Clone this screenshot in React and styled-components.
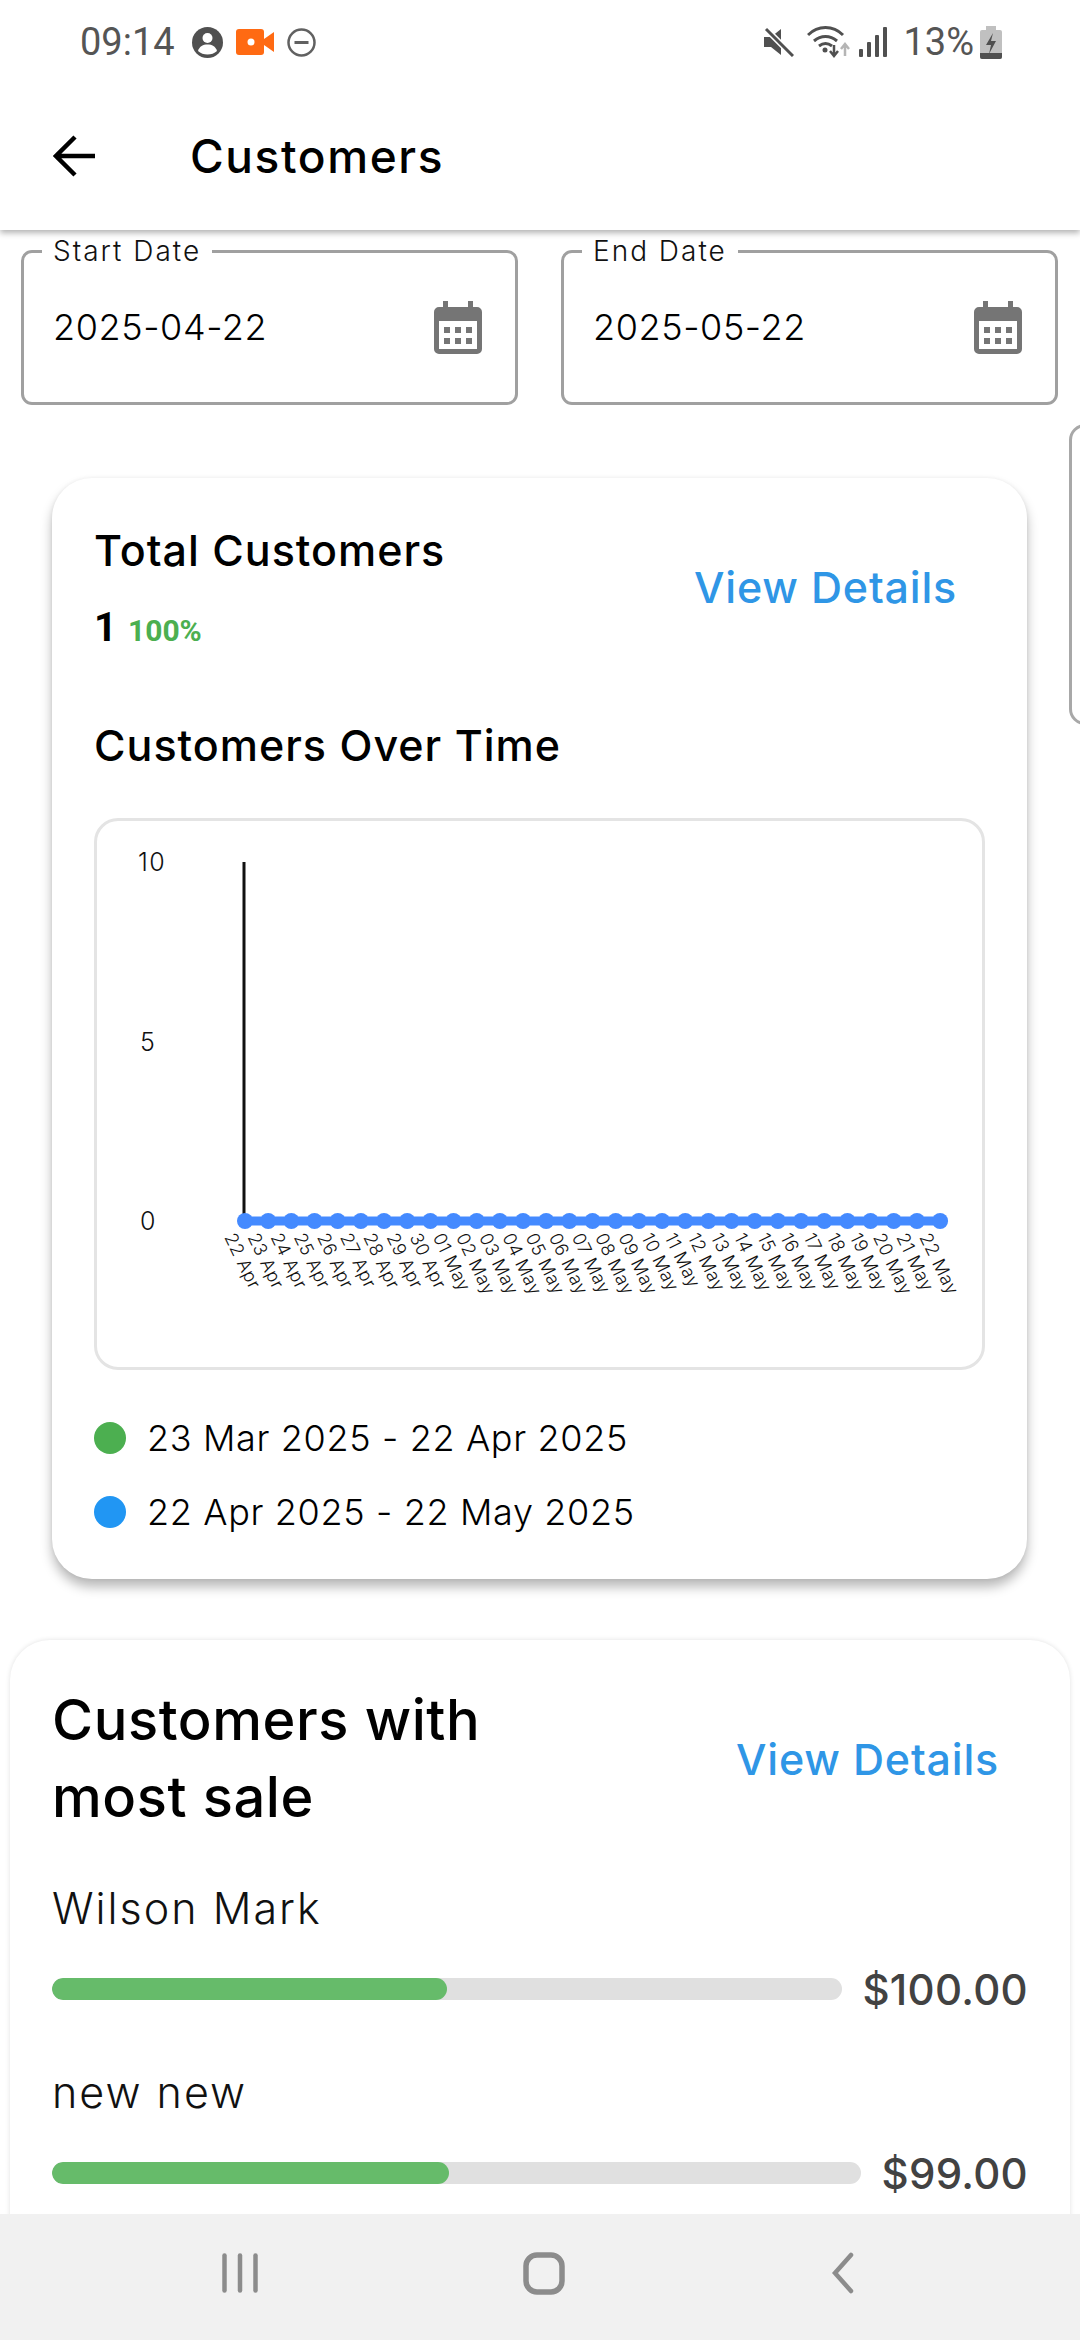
import styled, { createGlobalStyle } from 'styled-components';

const GlobalStyle = createGlobalStyle`
  html, body {
    margin: 0;
    padding: 0;
    background: #fff;
  }
  * {
    box-sizing: border-box;
  }
`;

const BASE = new Date(Date.UTC(2025, 3, 22));
const DAYS = Array.from({ length: 31 }, (_, i) => {
  const d = new Date(BASE.getTime() + i * 86400000);
  const day = String(d.getUTCDate()).padStart(2, '0');
  return `${day} ${d.getUTCMonth() === 3 ? 'Apr' : 'May'}`;
});

function CalendarIcon() {
  return (
    <svg width="48" height="53" viewBox="0 0 48 53">
      <rect x="9" y="0" width="5" height="8" fill="#757575" />
      <rect x="34" y="0" width="5" height="8" fill="#757575" />
      <path
        fill="#757575"
        fillRule="evenodd"
        d="M5 6h38a5 5 0 0 1 5 5v37a5 5 0 0 1-5 5H5a5 5 0 0 1-5-5V11a5 5 0 0 1 5-5zM5 20v28h38V20z"
      />
      {[10, 21, 32].map((x) =>
        [26, 37].map((y) => <rect key={`${x}${y}`} x={x} y={y} width="6" height="6" fill="#757575" />)
      )}
    </svg>
  );
}

function DateInput({ label, value }) {
  return (
    <Field>
      <FieldLabel>{label}</FieldLabel>
      <FieldValue>{value}</FieldValue>
      <CalendarIcon />
    </Field>
  );
}

function LineChart() {
  const x0 = 148;
  const step = 23.17;
  const y0 = 400;
  return (
    <svg width="884" height="546" viewBox="0 0 884 546">
      <line x1={x0 - 1} y1="41" x2={x0 - 1} y2={y0} stroke="#111" strokeWidth="3" />
      <ChartText x="41" y="50">10</ChartText>
      <ChartText x="43" y="230">5</ChartText>
      <ChartText x="43" y="409">0</ChartText>
      <line x1={x0} y1={y0} x2={x0 + step * 30} y2={y0} stroke="#448aff" strokeWidth="9" />
      {DAYS.map((day, i) => (
        <circle key={day} cx={x0 + step * i} cy={y0} r="8" fill="#448aff" />
      ))}
      {DAYS.map((day, i) => {
        const x = x0 - 21 + step * i;
        return (
          <AxisText key={day} x={x} y={416} transform={`rotate(64 ${x} 416)`}>
            {day}
          </AxisText>
        );
      })}
    </svg>
  );
}

function StatusBar() {
  return (
    <Status>
      <StatusGroup>
        <Time>09:14</Time>
        <svg width="31" height="31" viewBox="0 0 31 31">
          <circle cx="15.5" cy="15.5" r="15.5" fill="#505050" />
          <circle cx="15.5" cy="11" r="5" fill="#fff" />
          <path d="M6 24c1.5-5 5-6.5 9.5-6.5S23.500 19 25 24c-2.500 2.500-6 3.500-9.500 3.500S8.500 26.500 6 24z" fill="#fff" />
        </svg>
        <svg width="38" height="26" viewBox="0 0 38 26">
          <rect width="28" height="26" rx="3" fill="#ff6a13" />
          <path d="M28 10l10-7v20l-10-7z" fill="#ff6a13" />
          <circle cx="15" cy="13" r="3.500" fill="#fff" />
        </svg>
        <svg width="29" height="29" viewBox="0 0 29 29">
          <circle cx="14.500" cy="14.500" r="13" fill="none" stroke="#616161" strokeWidth="2.500" />
          <rect x="7.500" y="13" width="14" height="3" fill="#616161" />
        </svg>
      </StatusGroup>
      <StatusGroup>
        <svg width="30" height="30" viewBox="0 0 30 30">
          <path d="M0 10h7l10-8v26l-10-8H0z" fill="#505050" />
          <line x1="2" y1="2" x2="29" y2="29" stroke="#fff" strokeWidth="6" />
          <line x1="2" y1="2" x2="29" y2="29" stroke="#505050" strokeWidth="3" />
        </svg>
        <WifiIcon width="44" height="32" viewBox="0 0 44 32">
          <path d="M1 9c10-10 25-10 35 0M7 15c7-6 16-6 23 0M12 20c4-3 9-3 13 0" fill="none" stroke="#505050" strokeWidth="3" />
          <circle cx="18" cy="24" r="2.500" fill="#505050" />
          <path d="M27 19v9M23 25l4 5 4-5" fill="none" stroke="#505050" strokeWidth="2.500" />
          <path d="M38 30v-11M34 23l4-5 4 5" fill="none" stroke="#b5b5b5" strokeWidth="2.500" />
        </WifiIcon>
        <svg width="28" height="30" viewBox="0 0 28 30">
          <rect x="0" y="22" width="4" height="8" rx="1" fill="#505050" />
          <rect x="8" y="15" width="4" height="15" rx="1" fill="#505050" />
          <rect x="16" y="8" width="4" height="22" rx="1" fill="#505050" />
          <rect x="24" y="0" width="4" height="30" rx="1" fill="#505050" />
        </svg>
        <Battery>13%</Battery>
        <BatteryIcon width="22" height="33" viewBox="0 0 22 33">
          <rect x="6" y="0" width="10" height="5" fill="#c0c0c0" />
          <rect x="0" y="4" width="22" height="29" rx="2" fill="#c0c0c0" />
          <path d="M0 27h22v4a2 2 0 0 1-2 2H2a2 2 0 0 1-2-2z" fill="#505050" />
          <path d="M13 7l-7 12h5l-2 9 7-13h-5z" fill="#505050" />
        </BatteryIcon>
      </StatusGroup>
    </Status>
  );
}

export default function App() {
  return (
    <>
      <GlobalStyle />
      <Page>
        <TopBar>
          <StatusBar />
          <Header>
            <svg width="42" height="42" viewBox="0 0 42 42">
              <path d="M42 21H3M22 2L3 21l19 19" fill="none" stroke="#000" strokeWidth="4.500" />
            </svg>
            <Title>Customers</Title>
          </Header>
        </TopBar>

        <Content>
          <DateRow>
            <DateInput label="Start Date" value="2025-04-22" />
            <DateInput label="End Date" value="2025-05-22" />
          </DateRow>

          <Carousel>
            <Card>
              <CardTop>
                <div>
                  <CardTitle>Total Customers</CardTitle>
                  <CountRow>
                    <Count>1</Count>
                    <Percent>100%</Percent>
                  </CountRow>
                </div>
                <ViewDetails>View Details</ViewDetails>
              </CardTop>
              <ChartTitle>Customers Over Time</ChartTitle>
              <ChartBox>
                <LineChart />
              </ChartBox>
              <Legend>
                <LegendRow>
                  <LegendDot $color="#4caf50" />
                  <LegendText>23 Mar 2025 - 22 Apr 2025</LegendText>
                </LegendRow>
                <LegendRow>
                  <LegendDot $color="#2196f3" />
                  <LegendText>22 Apr 2025 - 22 May 2025</LegendText>
                </LegendRow>
              </Legend>
            </Card>
            <PeekCard />
          </Carousel>

          <SalesCard>
            <SalesTop>
              <SalesTitle>
                Customers with
                <br />
                most sale
              </SalesTitle>
              <SalesLink>View Details</SalesLink>
            </SalesTop>
            <SalesName>Wilson Mark</SalesName>
            <BarRow>
              <Track>
                <Fill $pct={50} />
              </Track>
              <Amount>$100.00</Amount>
            </BarRow>
            <SalesName $second>new new</SalesName>
            <BarRow>
              <Track>
                <Fill $pct={49} />
              </Track>
              <Amount>$99.00</Amount>
            </BarRow>
          </SalesCard>
        </Content>

        <NavBar>
          <svg width="36" height="40" viewBox="0 0 36 40">
            <g stroke="#8c8c8c" strokeWidth="4.500" strokeLinecap="round">
              <line x1="2.500" y1="2.500" x2="2.500" y2="37.500" />
              <line x1="18" y1="2.500" x2="18" y2="37.500" />
              <line x1="33.500" y1="2.500" x2="33.500" y2="37.500" />
            </g>
          </svg>
          <svg width="42" height="43" viewBox="0 0 42 43">
            <rect x="3" y="3" width="36" height="37" rx="11" fill="none" stroke="#8c8c8c" strokeWidth="5.500" />
          </svg>
          <svg width="24" height="42" viewBox="0 0 24 42">
            <path d="M21 3L5 21l16 18" fill="none" stroke="#8c8c8c" strokeWidth="4.500" strokeLinecap="round" />
          </svg>
        </NavBar>
      </Page>
    </>
  );
}

const Page = styled.div`
  width: 1080px;
  height: 2340px;
  display: flex;
  flex-direction: column;
  overflow: hidden;
  background: #fff;
  font-family: Inter, 'Noto Sans', sans-serif;
  color: #000;
`;

const TopBar = styled.div`
  flex-shrink: 0;
  background: #fff;
  box-shadow: 0 3px 6px rgba(0, 0, 0, 0.3);
  position: relative;
  z-index: 2;
`;

const Status = styled.div`
  height: 70px;
  padding: 14px 78px 0 80px;
  display: flex;
  align-items: center;
  justify-content: space-between;
`;

const StatusGroup = styled.div`
  display: flex;
  align-items: center;
  gap: 13px;
`;

const Time = styled.span`
  font-family: Roboto, sans-serif;
  font-size: 38px;
  color: #555;
  margin-right: 4px;
`;

const Battery = styled.span`
  font-family: Roboto, sans-serif;
  font-size: 38px;
  color: #555;
  margin-left: 3px;
`;

const WifiIcon = styled.svg`
  margin-right: -5px;
`;

const BatteryIcon = styled.svg`
  margin-left: -7px;
`;

const Header = styled.div`
  height: 160px;
  padding: 12px 0 0 53px;
  display: flex;
  align-items: center;
  gap: 95px;
`;

const Title = styled.h1`
  margin: 0;
  font-size: 46px;
  font-weight: 500;
  letter-spacing: 1.6px;
`;

const Content = styled.div`
  flex: 1;
  min-height: 0;
  overflow: hidden;
`;

const DateRow = styled.div`
  display: grid;
  grid-template-columns: 497px 497px;
  gap: 43px;
  padding: 4px 21px 0;
`;

const Field = styled.fieldset`
  margin: 0;
  height: 171px;
  padding: 0 33px 16px 29px;
  border: 3px solid #a0a0a0;
  border-radius: 11px;
  display: flex;
  align-items: center;
  justify-content: space-between;
`;

const FieldLabel = styled.legend`
  margin-left: -11px;
  padding: 0 11px;
  font-size: 28px;
  font-weight: 300;
  line-height: 34px;
  letter-spacing: 2px;
  color: #111;
`;

const FieldValue = styled.span`
  font-size: 36px;
  font-weight: 300;
  letter-spacing: 0.6px;
  color: #000;
`;

const Carousel = styled.div`
  display: flex;
  align-items: flex-start;
  gap: 42px;
  padding: 19px 0 61px 52px;
  overflow: hidden;
`;

const Card = styled.div`
  width: 975px;
  height: 1101px;
  margin-top: 54px;
  padding: 44px 42px 0;
  flex-shrink: 0;
  background: #fff;
  border-radius: 40px;
  box-shadow: 0 8px 12px rgba(0, 0, 0, 0.28), 0 0 4px rgba(0, 0, 0, 0.06);
`;

const PeekCard = styled.div`
  width: 100px;
  height: 301px;
  flex-shrink: 0;
  border: 3px solid #a8a8a8;
  border-radius: 16px;
`;

const CardTop = styled.div`
  display: flex;
  align-items: center;
  justify-content: space-between;
  padding-right: 28px;
`;

const CardTitle = styled.h2`
  margin: 0;
  font-size: 43px;
  font-weight: 500;
  line-height: 56px;
  letter-spacing: 1px;
`;

const CountRow = styled.div`
  display: flex;
  align-items: baseline;
  gap: 11px;
  margin-top: 22px;
  line-height: 56px;
`;

const Count = styled.span`
  font-family: Roboto, sans-serif;
  font-size: 40px;
  font-weight: 700;
`;

const Percent = styled.span`
  font-family: Roboto, sans-serif;
  font-size: 30px;
  font-weight: 700;
  color: #4caf50;
`;

const ViewDetails = styled.a`
  margin-bottom: 8px;
  font-size: 43px;
  font-weight: 500;
  letter-spacing: 0.8px;
  color: #2f96e6;
`;

const ChartTitle = styled.h3`
  margin: 58px 0 0;
  font-size: 43px;
  font-weight: 500;
  line-height: 56px;
  letter-spacing: 1px;
`;

const ChartBox = styled.div`
  width: 891px;
  height: 552px;
  margin: 45px 0 0;
  border: 3px solid #e4e4e4;
  border-radius: 24px;
  overflow: hidden;
`;

const ChartText = styled.text`
  font-family: Inter, sans-serif;
  font-size: 25px;
  font-weight: 300;
  letter-spacing: 1.5px;
  fill: #111;
`;

const AxisText = styled.text`
  font-family: Inter, sans-serif;
  font-size: 18px;
  font-weight: 300;
  letter-spacing: 0.5px;
  fill: #111;
`;

const Legend = styled.div`
  margin-top: 43px;
  display: flex;
  flex-direction: column;
  gap: 24px;
`;

const LegendRow = styled.div`
  display: flex;
  align-items: center;
  gap: 21px;
  height: 50px;
`;

const LegendDot = styled.span`
  width: 32px;
  height: 32px;
  border-radius: 50%;
  background: ${(props) => props.$color};
`;

const LegendText = styled.span`
  font-size: 36px;
  font-weight: 300;
  letter-spacing: 0.65px;
`;

const SalesCard = styled.div`
  width: 1060px;
  height: 700px;
  margin-left: 10px;
  padding: 42px 42px 0;
  background: #fff;
  border-radius: 40px;
  box-shadow: 0 0 5px rgba(0, 0, 0, 0.12);
`;

const SalesTop = styled.div`
  display: flex;
  align-items: center;
  justify-content: space-between;
  padding-right: 29px;
`;

const SalesTitle = styled.h2`
  margin: 0;
  font-size: 56px;
  font-weight: 500;
  line-height: 77px;
  letter-spacing: 0.6px;
`;

const SalesLink = styled(ViewDetails)`
  margin-bottom: 0;
`;

const SalesName = styled.div`
  margin-top: ${(props) => (props.$second ? '53px' : '47px')};
  font-size: 43px;
  font-weight: 300;
  line-height: 50px;
  letter-spacing: 2px;
  color: #111;
`;

const BarRow = styled.div`
  display: flex;
  align-items: center;
  gap: 20px;
  margin-top: 31px;
  height: 50px;
`;

const Track = styled.div`
  flex: 1;
  height: 22px;
  border-radius: 11px;
  background: #e0e0e0;
  overflow: hidden;
`;

const Fill = styled.div`
  width: ${(props) => props.$pct}%;
  height: 100%;
  border-radius: 11px;
  background: #66bb6a;
`;

const Amount = styled.span`
  font-size: 42px;
  font-weight: 500;
  letter-spacing: 0.3px;
  color: #424242;
`;

const NavBar = styled.div`
  height: 126px;
  flex-shrink: 0;
  padding: 0 226px 8px 222px;
  display: flex;
  align-items: center;
  justify-content: space-between;
  background: #f1f1f1;
  position: relative;
  z-index: 2;
`;
